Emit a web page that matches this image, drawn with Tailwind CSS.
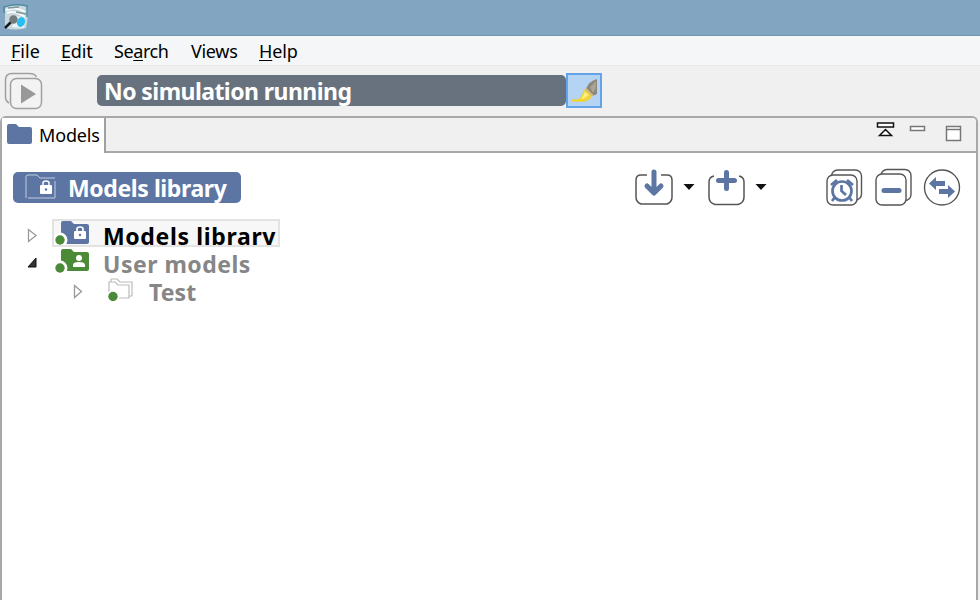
<!DOCTYPE html>
<html lang="en">
<head>
<meta charset="utf-8">
<title>Models</title>
<script src="https://cdn.jsdelivr.net/npm/@tailwindcss/browser@4"></script>
</head>
<body class="w-[980px] h-[600px] overflow-hidden bg-[#f0f0f0] flex flex-col font-['Noto_Sans','Open_Sans',sans-serif] text-black">
<header class="h-9 shrink-0 bg-[#82a6c1] border-b border-[#7396b0] pl-[3px] pt-1">
  <svg width="26" height="27" viewBox="0 0 26 27">
    <path d="M2 2Q12-1 24 2Q26 12 23 24Q12 27 2 24Z" fill="#c9d8dc"/>
    <path d="M1 9V3Q12-1 24 2V13" fill="none" stroke="#4e8aa3" stroke-width="1.5"/>
    <path d="M3 6Q13 2 22 8M4 9Q12 6 22 13" fill="none" stroke="#f7fafa" stroke-width="2"/>
    <path d="M5 4L16 3M13 8L23 10" stroke="#7d979d" stroke-width="1.5"/>
    <path d="M13 12L22 14L21 24L9 23Z" fill="#eaf6f8"/>
    <path d="M8 18L2 24" stroke="#161a20" stroke-width="2.5"/>
    <circle cx="10.500" cy="15.500" r="4.200" fill="#737b7c"/>
    <ellipse cx="18" cy="18" rx="4" ry="5" transform="rotate(20 18 18)" fill="#27bdf3"/>
  </svg>
</header>
<nav class="h-[30px] shrink-0 bg-[#f5f6f7] border-b border-[#e8e8ea] flex pl-[11px] text-[18px] leading-[30px] whitespace-nowrap">
  <span class="w-[50px]"><u class="underline-offset-2">F</u>ile</span>
  <span class="w-[53px] tracking-[-0.2px]"><u class="underline-offset-2">E</u>dit</span>
  <span class="w-[77px] tracking-[-0.4px]">Se<u class="underline-offset-2">a</u>rch</span>
  <span class="w-[68px] tracking-[-0.3px]">Views</span>
  <span class="tracking-[-0.1px]"><u class="underline-offset-2">H</u>elp</span>
</nav>
<div class="h-[50px] shrink-0 flex pl-1 pt-[6px]">
  <svg class="mr-[53px]" width="40" height="40" viewBox="0 0 40 40" fill="none" stroke="#a0a0a0" stroke-width="1.500">
    <path d="M5 31Q1.500 29 1.500 25V8Q1.500 1.500 8 1.500H25Q31 1.500 32.500 5"/>
    <rect x="6.500" y="6.500" width="31" height="30" rx="6" fill="#f3f3f3"/>
    <path d="M17 12.500L32 22L17 31.500Z" fill="#999" stroke="none"/>
  </svg>
  <div class="mt-[3px] w-[469px] h-[31px] rounded-[5px] bg-[#67727e] pl-[7px] text-white font-bold text-[23px] leading-[33px] tracking-[-0.56px] whitespace-nowrap">No simulation running</div>
  <div class="mt-px w-9 h-[35px] bg-[#b5d3f2] border-2 border-[#65a3e8]">
    <svg width="32" height="31" viewBox="0 0 32 31">
      <path d="M18 14Q21 6 29 4V19L24 21Z" fill="#8d8778"/>
      <path d="M22 12L28 6V13L25 18Z" fill="#aaa497"/>
      <path d="M18 13L25 20L21 25Q16 27 8 26Q14 22 16 15Z" fill="#f1d33b"/>
      <path d="M17 17L21 20L13 25Z" fill="#fff087"/>
      <path d="M17.500 13.500L24.500 20.500" stroke="#cdb68a" stroke-width="2"/>
      <path d="M4 25.500H18" stroke="#f4d51e" stroke-width="2"/>
    </svg>
  </div>
</div>
<main class="w-[978px] h-[484px] border-2 border-b-0 border-t-[#a8a8a8] border-x-[#a8a8a8] rounded-t-[6px] bg-white">
  <div class="h-[35px] flex">
    <div class="w-[104px] bg-white border-r-2 border-[#a0a0a0] flex pl-[5px] pt-[5px]">
      <svg width="26" height="22" viewBox="0 0 26 22"><path d="M0 3Q0 1 2 1H9L12 4H23Q25 4 25 6V19Q25 21 23 21H2Q0 21 0 19Z" fill="#5c75a2"/></svg>
      <span class="ml-[6px] text-[18px] leading-6 tracking-[-0.15px]">Models</span>
    </div>
    <div class="flex-1 bg-[#f0f0f0] border-b-2 border-[#a8a8a8] rounded-tr-[4px] flex pl-[769px]">
      <svg width="100" height="33" viewBox="0 0 100 33" fill="#fff">
        <path d="M2.500 5H18.500V9H2.500ZM4.500 17.500L10.500 11.500L16.500 17.500Z" stroke="#111" stroke-width="1.500"/>
        <path d="M35.500 8.500H49.500V12.500H35.500Z" stroke="#777" stroke-width="1.500"/>
        <path d="M71.500 8.500H85.500V22.500H71.500ZM71.500 11.500H85.500" stroke="#777" stroke-width="1.500"/>
      </svg>
    </div>
  </div>
  <div class="h-[67px] flex pl-[11px] pt-[15px]">
    <div class="mt-1 w-[228px] h-[31px] bg-[#5c75a2] rounded-[5px] flex text-white">
      <svg class="ml-3" width="32" height="31" viewBox="0 0 32 31">
        <path d="M1 26V5Q1 3 3 3H12L15 6H30M30 9V26H3" fill="none" stroke="#c2cee1" stroke-width="1"/>
        <rect x="15" y="13" width="12" height="9" rx="1" fill="#fff"/><path d="M18 14V11Q18 9 21 9T24 11V14" fill="none" stroke="#fff" stroke-width="1.500"/><circle cx="21" cy="17.500" r="1.200" fill="#5c75a2"/>
      </svg>
      <span class="ml-[11px] text-[23px] leading-[33px] font-bold tracking-[-0.4px] whitespace-nowrap">Models library</span>
    </div>
    <svg class="ml-[392px]" width="140" height="40" viewBox="0 0 140 40">
      <path d="M14 7H8Q3 7 3 12V29Q3 34 8 36H34Q39 34 39 29V12Q39 7 34 7H28" fill="none" stroke="#555" stroke-width="1.500"/>
      <path d="M21 4V23M14 18L21 25L28 18" fill="none" stroke="#5c75a2" stroke-width="5" stroke-linecap="round" stroke-linejoin="round"/>
      <path d="M50.500 16H61.500L56 22ZM122.500 16H133.500L128 22Z" fill="#111"/>
      <path d="M81 8Q76 9 76 14V29Q76 35 82 36.500H105Q111 35 111 29V14Q111 9 106 8" fill="none" stroke="#555" stroke-width="1.500"/>
      <path d="M93.500 4.500V20.500M85.500 12.500H101.500" fill="none" stroke="#5c75a2" stroke-width="5" stroke-linecap="round"/>
    </svg>
    <svg class="ml-[51px]" width="140" height="40" viewBox="0 0 140 40" fill="#fff" stroke="#555" stroke-width="1.400">
      <rect x="7.500" y="2" width="30" height="30" rx="6"/><rect x="3" y="7" width="30" height="30" rx="6"/>
      <g fill="none" stroke="#5c75a2" stroke-width="2.700"><circle cx="18" cy="23" r="9.500"/><path d="M17.500 17V23L22 27M11 29L8 33M25 29L28 33M7 17L13 12M23 12L29 17"/></g>
      <rect x="57" y="1.500" width="30" height="31" rx="6"/><rect x="52" y="6" width="30" height="31" rx="6"/>
      <path d="M60 22.500H75" stroke="#5c75a2" stroke-width="5" stroke-linecap="round"/>
      <circle cx="118" cy="19.500" r="17.500"/>
      <path d="M105 15.500L112 9V13H121V18H112V22ZM131 23.500L124 17V21H115V26H124V30Z" fill="#5c75a2" stroke="none"/>
    </svg>
  </div>
  <div class="text-[23px] font-bold whitespace-nowrap text-[#868686]">
    <div class="h-7 flex pl-[25px]">
      <svg width="12" height="28" viewBox="0 0 12 28"><path d="M1.500 9.500V21.500L9 15.500Z" fill="#fff" stroke="#999" stroke-width="1.300"/></svg>
      <div class="ml-[13px] -mt-px w-[228px] h-7 border-2 border-[#e3e3e3] bg-[#f7f7f7] flex overflow-hidden text-black">
        <svg width="40" height="26" viewBox="0 0 40 26">
          <path d="M7 2Q7 0 9 0H17L20 3H33Q35 3 35 5V21Q35 23 33 23H7Z" fill="#5c75a2"/><circle cx="6" cy="19" r="7.500" fill="#fff"/><circle cx="6" cy="19" r="4.700" fill="#4b8a37"/>
          <rect x="20" y="10" width="12" height="8" rx="1" fill="#fff"/><path d="M23 11V8Q23 6 26 6T29 8V11" fill="none" stroke="#fff" stroke-width="1.700"/><circle cx="26" cy="14" r="1.200" fill="#5c75a2"/>
        </svg>
        <span class="ml-[9px] leading-[31px] tracking-[0.65px]">Models library</span>
      </div>
    </div>
    <div class="h-7 flex pl-[25px]">
      <svg width="12" height="28" viewBox="0 0 12 28"><path d="M1 19L9 10V19Z" fill="#333" stroke="#111"/></svg>
      <svg class="ml-[15px]" width="40" height="28" viewBox="0 0 40 28">
        <path d="M7 3Q7 1 9 1H17L20 4H33Q35 4 35 6V21Q35 23 33 23H7Z" fill="#4b8a37"/><circle cx="6" cy="20" r="7.500" fill="#fff"/><circle cx="6" cy="20" r="4.700" fill="#4b8a37"/>
        <circle cx="25" cy="10" r="3" fill="#fff"/><path d="M19 19V17Q19 14 25 14T31 17V19Z" fill="#fff"/>
      </svg>
      <span class="ml-[9px] leading-8 tracking-[0.5px]">User models</span>
    </div>
    <div class="h-7 flex pl-[70px]">
      <svg width="12" height="28" viewBox="0 0 12 28"><path d="M2.500 9.500V21.500L9.500 15.500Z" fill="#fff" stroke="#999" stroke-width="1.300"/></svg>
      <svg class="ml-[21px]" width="30" height="30" viewBox="0 0 30 30" fill="#fff" stroke="#bbb" stroke-width="1.200">
        <path d="M7 3H13L16 6H28V20H8Z" transform="translate(-1 0)"/><path d="M4 21V6H10L13 9H24V22H5Z"/><circle cx="8" cy="20.500" r="6.500" stroke="none"/><circle cx="8" cy="20.500" r="4.700" stroke="none" fill="#4b8a37"/>
      </svg>
      <span class="ml-[14px] leading-8 tracking-[0.1px]">Test</span>
    </div>
  </div>
</main>
</body>
</html>
